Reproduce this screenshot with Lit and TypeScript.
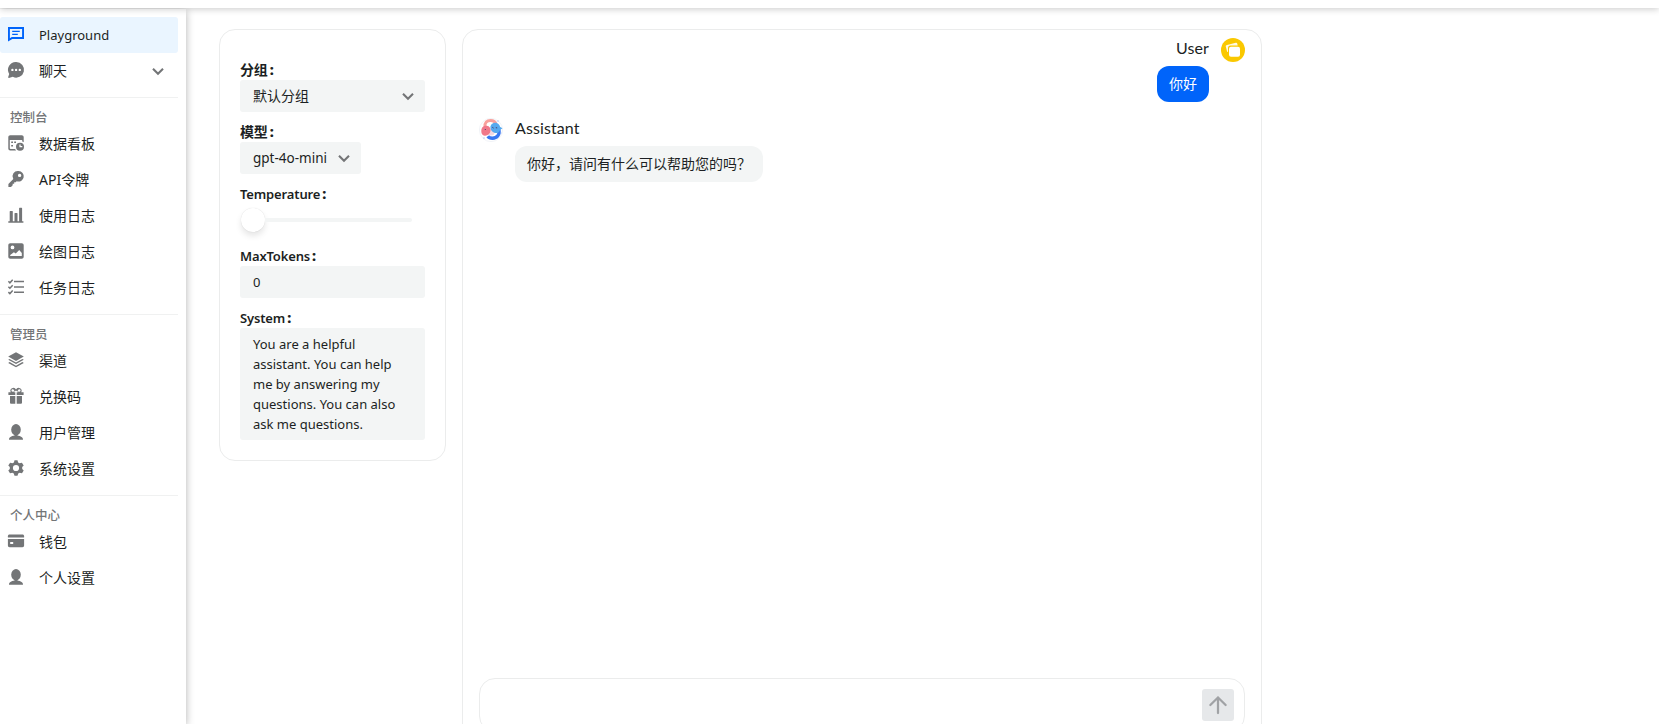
import { LitElement, html, svg, css, nothing } from 'lit';
import { customElement, property, state } from 'lit/decorators.js';
import { classMap } from 'lit/directives/class-map.js';

const ICONS: Record<string, unknown> = {
  comment: svg`<path fill-rule="evenodd" d="M0 1h16v12H4.300L0 15.500V1Zm1.900 1.900v9.300l1.800-1.200h10.400V2.900H1.900Z"/><path d="M4.200 4.700h7.600v1.400H4.200zM4.200 7.700h5.600v1.400H4.200z"/>`,
  bubble: svg`<path fill-rule="evenodd" d="M8.2 0a7.8 7.8 0 1 1-3.4 14.8L.9 15.9c-.6.1-.9-.3-.7-.8l1-3.2A7.8 7.8 0 0 1 8.2 0ZM4.400 6.700a1.200 1.200 0 1 0 0 2.400 1.200 1.200 0 0 0 0-2.400Zm3.700 0a1.200 1.200 0 1 0 0 2.400 1.200 1.200 0 0 0 0-2.400Zm3.700 0a1.200 1.200 0 1 0 0 2.400 1.200 1.200 0 0 0 0-2.400Z"/>`,
  calendar: svg`<path fill-rule="evenodd" d="M2.300.3h11.400c1.200 0 2 .9 2 2v4.900a5 5 0 0 0-1.500-.6V5H1.800v8.200c0 .5.3.8.8.8h4.500c.3.6.6 1.100 1 1.600H2.300c-1.200 0-2-.9-2-2V2.300c0-1.100.8-2 2-2Z"/><path d="M3.200 6.500h1.800v1.600H3.200zM6.200 6.500H8v1.600H6.200zM3.200 10h1.800v1.600H3.200z"/><path fill-rule="evenodd" d="M12 7.700a4 4 0 1 1 0 8 4 4 0 0 1 0-8Zm-.6 1.700v2.900h2.900v-1.200h-1.700V9.400h-1.200Z"/>`,
  key: svg`<path fill-rule="evenodd" d="M10.600 0a5.300 5.300 0 1 1-1.900 10.300l-1 1H6.200v1.500H4.700v1.400L3 15.900H.4v-3l4.900-4.900A5.300 5.300 0 0 1 10.600 0Zm1 2.700a1.700 1.700 0 1 0 0 3.400 1.700 1.700 0 0 0 0-3.400Z"/>`,
  histogram: svg`<path d="M.3 14.300h1.400V4.500c0-.3.2-.5.500-.5h2.100c.3 0 .5.200.5.500v9.800h1.700V6.500c0-.3.2-.5.500-.5h2c.3 0 .5.200.5.500v7.800h1.600V1.200c0-.3.2-.5.500-.5h2c.3 0 .5.200.5.500v13.100h1.300v1.500H.3z"/>`,
  image: svg`<path fill-rule="evenodd" d="M2.300.3h11.400c1.200 0 2 .8 2 2v11.400c0 1.200-.8 2-2 2H2.300c-1.200 0-2-.8-2-2V2.300c0-1.200.8-2 2-2Zm2.200 2.200a1.900 1.900 0 1 0 0 3.800 1.900 1.900 0 0 0 0-3.800ZM2.200 13h11.600V9.900l-2.600-3-3.400 3.600-1.900-1.200L2.200 12V13Z"/>`,
  checklist: svg`<g fill="none" stroke="currentColor" stroke-width="1.5"><path d="M6 2.500h10M6 7.900h10M6 13.300h10"/><path d="M.4 2.300l1.500 1.500L4.700.8M.4 7.700l1.500 1.500 2.800-3M.4 13.100l1.500 1.500 2.800-3"/></g>`,
  layers: svg`<path d="M8 .3l7.800 4.200L8 8.900.2 4.500z"/><path d="M1.600 6.900L8 10.500l6.400-3.600 1.400.8L8 12.100.2 7.700zM1.600 10.100L8 13.700l6.400-3.600 1.400.8L8 15.300.2 10.900z"/>`,
  gift: svg`<path fill-rule="evenodd" d="M.4 4.300h2.400A2.900 2.900 0 0 1 8 1.500a2.900 2.900 0 0 1 5.200 2.800h2.400v2.600H8.700V4.300h1.600L8 2.600 5.700 4.300h1.600v2.600H.4V4.300ZM4.800 1.300a1.200 1.200 0 0 0-.3 2.400l2.100-.3-.7-1.500a1.200 1.200 0 0 0-1.100-.6Zm6.400 0c-.5 0-.9.2-1.100.6l-.7 1.500 2.100.3a1.200 1.200 0 0 0-.3-2.400Z"/><path d="M2 8.100h5.300v7.700H3a1 1 0 0 1-1-1zM8.700 8.100H14v6.700a1 1 0 0 1-1 1H8.700z"/>`,
  user: svg`<ellipse cx="8" cy="5.700" rx="4.800" ry="5.700"/><path d="M6.600 10h2.800v2H6.600z"/><path d="M8 11.400c3.600.2 6.600 1.300 7 3.500.1.500-.2.900-.7.900H1.700c-.5 0-.8-.4-.7-.9.400-2.200 3.400-3.300 7-3.500Z"/>`,
  gear: svg`<path fill-rule="evenodd" d="M6.500.2h3l.6 2.200 1.500.9 2.300-.6 1.800 2.800L14.200 7v1.900l1.500 1.600-1.700 2.800-2.400-.6-1.400.9-.7 2.200h-3l-.7-2.200-1.400-.9-2.400.6L.3 10.500l1.500-1.600V7L.3 5.500l1.800-2.800 2.300.6 1.500-.9L6.500.2ZM8 4.900a3.100 3.100 0 1 0 0 6.200 3.100 3.100 0 0 0 0-6.200Z"/>`,
  card: svg`<path d="M1.600 1.500h12.800c1 0 1.700.7 1.700 1.700v1.300H-.1V3.200c0-1 .7-1.700 1.700-1.700Z"/><path fill-rule="evenodd" d="M-.1 6h16.200v6.600c0 1-.7 1.700-1.700 1.700H1.600c-1 0-1.700-.7-1.700-1.700V6Zm2.300 3v2h3V9h-3Z"/>`,
  chevron: svg`<path d="M3 5.700l5 5 5-5" fill="none" stroke="currentColor" stroke-width="2.100"/>`,
  arrowUp: svg`<path d="M8 15.200V1.300M1.200 8L8 1.300 14.800 8" fill="none" stroke="currentColor" stroke-width="2" stroke-linecap="round" stroke-linejoin="round"/>`,
};

@customElement('ui-icon')
export class UiIcon extends LitElement {
  @property() name = '';

  render() {
    return html`<svg viewBox="0 0 16 16" fill="currentColor">${ICONS[this.name] ?? nothing}</svg>`;
  }

  static styles = css`
    :host {
      display: block;
      flex: none;
      width: 16px;
      height: 16px;
    }

    svg {
      display: block;
      width: 100%;
      height: 100%;
      overflow: visible;
    }
  `;
}

interface NavItem {
  icon: string;
  text: string;
  latin?: boolean;
  expandable?: boolean;
}

interface NavGroup {
  title?: string;
  items: NavItem[];
}

const NAV: NavGroup[] = [
  {
    items: [
      { icon: 'comment', text: 'Playground', latin: true },
      { icon: 'bubble', text: '聊天', expandable: true },
    ],
  },
  {
    title: '控制台',
    items: [
      { icon: 'calendar', text: '数据看板' },
      { icon: 'key', text: 'API令牌' },
      { icon: 'histogram', text: '使用日志' },
      { icon: 'image', text: '绘图日志' },
      { icon: 'checklist', text: '任务日志' },
    ],
  },
  {
    title: '管理员',
    items: [
      { icon: 'layers', text: '渠道' },
      { icon: 'gift', text: '兑换码' },
      { icon: 'user', text: '用户管理' },
      { icon: 'gear', text: '系统设置' },
    ],
  },
  {
    title: '个人中心',
    items: [
      { icon: 'card', text: '钱包' },
      { icon: 'user', text: '个人设置' },
    ],
  },
];

@customElement('side-nav')
export class SideNav extends LitElement {
  @state() selected = 'Playground';

  renderItem(item: NavItem) {
    const active = item.text === this.selected;
    return html`
      <div class=${classMap({ item: true, active })} @click=${() => (this.selected = item.text)}>
        <ui-icon class="icon" name=${item.icon}></ui-icon>
        <span class=${classMap({ text: true, latin: !!item.latin })}>${item.text}</span>
        ${item.expandable ? html`<ui-icon name="chevron"></ui-icon>` : nothing}
      </div>
    `;
  }

  render() {
    return NAV.map(
      (group) => html`
        ${group.title ? html`<div class="title">${group.title}</div>` : nothing}
        ${group.items.map((item) => this.renderItem(item))}
      `
    );
  }

  static styles = css`
    :host {
      display: block;
      box-sizing: border-box;
      width: 186px;
      padding: 8px 8px 0 0;
      background: #fff;
      box-shadow: 0 2px 8px rgba(0, 0, 0, 0.3);
    }

    .item {
      display: flex;
      align-items: center;
      box-sizing: border-box;
      height: 36px;
      padding: 0 12px 0 8px;
      border-radius: 3px;
      color: #737577;
      cursor: pointer;
    }

    .icon {
      margin-bottom: 2px;
    }

    .text {
      flex: 1;
      margin-left: 15px;
      color: #1c1f23;
    }

    .latin {
      font-size: 13px;
    }

    .active {
      background: #eaf5ff;
      color: #0064fa;
    }

    .title {
      margin-top: 8px;
      padding: 9px 10px 0;
      height: 19px;
      border-top: 1px solid #f0f1f1;
      font-size: 12.5px;
      font-weight: 500;
      line-height: 21px;
      color: #737577;
    }
  `;
}

@customElement('settings-panel')
export class SettingsPanel extends LitElement {
  @property() group = '默认分组';
  @property() model = 'gpt-4o-mini';
  @property({ type: Number }) maxTokens = 0;
  @property({ type: Array }) system = [
    'You are a helpful',
    'assistant. You can help',
    'me by answering my',
    'questions. You can also',
    'ask me questions.',
  ];

  render() {
    return html`
      <div class="label">分组<b class="colon">:</b></div>
      <div class="field">
        <span class="value">${this.group}</span>
        <ui-icon name="chevron"></ui-icon>
      </div>
      <div class="label">模型<b class="colon">:</b></div>
      <div class="field compact">
        <span class="value">${this.model}</span>
        <ui-icon name="chevron"></ui-icon>
      </div>
      <div class="label latin">Temperature<b class="colon">:</b></div>
      <div class="slider">
        <div class="thumb"></div>
        <div class="rail"></div>
      </div>
      <div class="label latin">MaxTokens<b class="colon">:</b></div>
      <div class="field latin">${this.maxTokens}</div>
      <div class="label latin">System<b class="colon">:</b></div>
      <div class="area latin">${this.system.map((line) => html`<div>${line}</div>`)}</div>
    `;
  }

  static styles = css`
    :host {
      display: block;
      box-sizing: border-box;
      width: 227px;
      padding: 20px;
      border: 1px solid #ebecec;
      border-radius: 16px;
    }

    .label {
      margin-top: 10px;
      height: 20px;
      line-height: 20px;
      font-weight: 600;
      letter-spacing: -0.15px;
    }

    .latin {
      font-size: 13px;
    }

    .colon {
      margin-left: 2px;
      font-size: 14px;
    }

    .field {
      display: flex;
      align-items: center;
      box-sizing: border-box;
      height: 32px;
      padding: 0 9px 0 13px;
      border-radius: 3px;
      background: #f3f5f5;
    }

    .field ui-icon {
      color: #737577;
    }

    .value {
      flex: 1;
    }

    .compact {
      width: 121px;
      font-size: 13.5px;
    }

    .slider {
      display: flex;
      align-items: center;
      height: 32px;
      padding: 0 13px 0 1px;
    }

    .thumb {
      width: 24px;
      height: 24px;
      border-radius: 50%;
      background: #fff;
      box-shadow: 0 4px 6px rgba(0, 0, 0, 0.1), 0 0 1px rgba(0, 0, 0, 0.15);
    }

    .rail {
      flex: 1;
      height: 4px;
      border-radius: 0 2px 2px 0;
      background: #f3f5f5;
    }

    .area {
      padding: 6px 13px;
      border-radius: 3px;
      background: #f3f5f5;
      line-height: 20px;
      white-space: nowrap;
    }
  `;
}

@customElement('chat-message')
export class ChatMessage extends LitElement {
  @property({ reflect: true }) role = 'assistant';
  @property() text = '';

  renderAvatar() {
    if (this.role === 'user') {
      return html`
        <svg class="avatar" viewBox="0 0 24 24">
          <circle cx="12" cy="12" r="12" fill="#fac800" />
          <path d="M6 7l8.800-2.200a1.200 1.200 0 0 1 1.500.9l.4 1.800H9.500a2.500 2.500 0 0 0-2.500 2.500v4c-.6.1-.9-.2-1-.7L4.800 8.500C4.600 7.700 5.200 7.200 6 7Z" fill="#fff" fill-opacity=".9" />
          <rect x="8" y="8.700" width="11" height="10" rx="2" fill="#fff" />
        </svg>
      `;
    }
    return html`
      <svg class="avatar" viewBox="0 0 24 24">
        <circle cx="12" cy="12" r="11.6" fill="#fff" stroke="#eef0f5" stroke-width=".8" />
        <path d="M6 9C5.500 4.500 8 2.400 11.500 2.400c3.200 0 5 1.600 5.500 3.800" fill="none" stroke="#f8a09c" stroke-width="3" />
        <path d="M19.800 11.500c1.300 5-1.800 8.700-6.300 8.700-2.200 0-3.700-.6-4.700-2" fill="none" stroke="#3978f2" stroke-width="3.400" />
        <circle cx="12" cy="14" r="3.600" fill="#f3d8e2" />
        <path d="M2.300 13.200C2.300 9 4.800 7.500 7.800 7.800c2.800.3 4 2.500 3.700 5-.3 3.200-2.700 5.100-5.700 4.900-2.500-.2-3.500-2-3.500-4.500Z" fill="#f0788a" />
        <path d="M11.500 8.200c.8-3 4-4.200 6.700-3 2 .8 2.600 2.300 3 3.700l2.300 1.400-2.500 1.600c-.5 2.500-2.700 3.500-5 3-3-.6-5-3.700-4.500-6.700Z" fill="#56a9ee" />
        <path d="M5.800 11.500h1M13.300 9.300l1.300.8M16.800 9.700l1.400.2" stroke="#48406e" stroke-width="1" />
        <path d="M4.500 20h1M18.500 3h1M21.500 15h.8" stroke="#7a9cf0" stroke-width="1" />
      </svg>
    `;
  }

  render() {
    return html`
      ${this.renderAvatar()}
      <div class="body">
        <div class="name">${this.role === 'user' ? 'User' : 'Assistant'}</div>
        <div class="bubble">${this.text}</div>
      </div>
    `;
  }

  static styles = css`
    :host {
      display: flex;
      gap: 12px;
    }

    :host([role='user']) {
      flex-direction: row-reverse;
    }

    .avatar {
      flex: none;
      width: 24px;
      height: 24px;
      margin-top: 8px;
    }

    .body {
      display: flex;
      flex-direction: column;
      align-items: flex-start;
      gap: 8px;
    }

    :host([role='user']) .body {
      align-items: flex-end;
    }

    .name {
      padding-top: 6px;
      height: 22px;
      font: 16px/24px Lato, sans-serif;
      letter-spacing: 0.1px;
    }

    .bubble {
      box-sizing: border-box;
      height: 36px;
      padding: 8px 12px;
      border-radius: 12px;
      background: #f3f5f5;
      line-height: 20px;
    }

    :host([role='user']) .bubble {
      background: #0064fa;
      color: #fff;
    }
  `;
}

@customElement('app-root')
export class AppRoot extends LitElement {
  render() {
    return html`
      <header class="header"></header>
      <div class="layout">
        <side-nav class="nav"></side-nav>
        <main class="content">
          <settings-panel></settings-panel>
          <section class="chat">
            <chat-message role="user" text="你好"></chat-message>
            <chat-message role="assistant" text="你好，请问有什么可以帮助您的吗？"></chat-message>
            <div class="composer">
              <button class="send"><ui-icon class="arrow" name="arrowUp"></ui-icon></button>
            </div>
          </section>
        </main>
      </div>
    `;
  }

  static styles = css`
    :host {
      display: flex;
      flex-direction: column;
      height: 724px;
      overflow: hidden;
      background: #fff;
      color: #1c1f23;
      font: 14px/20px 'Noto Sans', 'Noto Sans CJK SC', sans-serif;
    }

    .header {
      flex: none;
      z-index: 1;
      height: 8px;
      margin-bottom: 1px;
      background: #fff;
      box-shadow: 0 1px 7px rgba(0, 0, 0, 0.22);
    }

    .layout {
      display: flex;
      flex: 1;
      min-height: 0;
    }

    .nav {
      flex: none;
    }

    .content {
      display: flex;
      align-items: flex-start;
      gap: 16px;
      padding: 20px 0 0 33px;
    }

    .chat {
      display: flex;
      flex-direction: column;
      gap: 8px;
      box-sizing: border-box;
      width: 800px;
      height: 760px;
      padding: 0 16px 56px;
      border: 1px solid #ebecec;
      border-radius: 16px;
    }

    .composer {
      display: flex;
      justify-content: flex-end;
      box-sizing: border-box;
      height: 54px;
      margin-top: auto;
      padding: 10px;
      border: 1px solid #ebecec;
      border-radius: 16px;
    }

    .send {
      display: grid;
      place-items: center;
      width: 32px;
      height: 32px;
      padding: 0;
      border: none;
      border-radius: 3px;
      background: #e6e8ea;
      color: #a0a2a5;
    }

    .arrow {
      width: 18px;
      height: 18px;
    }
  `;
}
